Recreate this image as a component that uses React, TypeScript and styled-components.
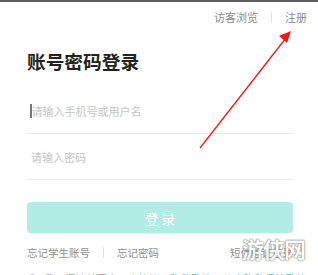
import React from 'react';
import styled, { createGlobalStyle } from 'styled-components';

const GlobalStyle = createGlobalStyle`
  html, body {
    margin: 0;
    padding: 0;
    background: #ffffff;
  }
  body {
    font-family: "Noto Sans CJK SC", "Noto Sans", sans-serif;
  }
`;

const Screen = styled.div`
  position: relative;
  width: 318px;
  height: 275px;
  overflow: hidden;
  background: #fff;
  border-top: 2px solid #5f5f5f;
  box-sizing: border-box;
`;

const TopBar = styled.div`
  display: flex;
  justify-content: flex-end;
  align-items: center;
  height: 30px;
  padding: 0 11px 0 0;
  gap: 13px;
  font-size: 11px;
  color: #8a8a8a;
`;

const Divider = styled.span<{ $h: number }>`
  width: 1px;
  height: ${({ $h }) => $h}px;
  background: #e2e2e2;
`;

const Body = styled.div`
  padding: 0 25px 0 27px;
`;

const Title = styled.h1`
  margin: 16px 0 0;
  font-size: 18.7px;
  line-height: 26px;
  font-weight: 700;
  color: #222;
`;

const Field = styled.div`
  display: flex;
  align-items: center;
  height: 45px;
  border-bottom: 1px solid #ececec;
  font-size: 11px;
  color: #c4c4c4;
`;

const FirstField = styled(Field)`
  margin-top: 14px;
`;

const Caret = styled.span`
  width: 1.5px;
  height: 14px;
  margin-left: 3px;
  background: #777;
`;

const Placeholder = styled.span<{ $pad: number }>`
  padding-left: ${({ $pad }) => $pad}px;
`;

const LoginButton = styled.button`
  display: block;
  width: 100%;
  height: 31px;
  margin-top: 22px;
  border: none;
  border-radius: 4px;
  background: #b2ede5;
  color: #fff;
  font-family: inherit;
  font-size: 13.5px;
  letter-spacing: 3px;
  text-indent: 3px;
  padding: 0;
`;

const LinkRow = styled.div`
  display: flex;
  align-items: center;
  height: 38px;
  font-size: 10.5px;
  color: #8e8e8e;
  gap: 13px;
`;

const Spacer = styled.div`
  flex: 1;
`;

const Agree = styled.div`
  display: flex;
  align-items: center;
  gap: 6px;
  font-size: 10.5px;
  line-height: 16px;
  color: #999;
  white-space: nowrap;
`;

const Radio = styled.span`
  width: 9px;
  height: 9px;
  border: 1px solid #bbb;
  border-radius: 50%;
  flex: none;
`;

const LinkText = styled.span`
  color: #34c3b0;
`;

const Watermark = styled.div`
  position: absolute;
  left: 242px;
  top: 230px;
  font-size: 22px;
  font-weight: 700;
  color: #ffffff;
  letter-spacing: -1px;
  text-shadow: 0 0 1px #555, 0 0 2px #777;
  opacity: 0.9;
  pointer-events: none;
`;

const Arrow = styled.svg`
  position: absolute;
  left: 0;
  top: 0;
  pointer-events: none;
`;

export default function App() {
  return (
    <>
      <GlobalStyle />
      <Screen>
        <TopBar>
          <span>访客浏览</span>
          <Divider $h={11} />
          <span>注册</span>
        </TopBar>
        <Body>
          <Title>账号密码登录</Title>
          <FirstField>
            <Caret />
            <Placeholder $pad={0}>请输入手机号或用户名</Placeholder>
          </FirstField>
          <Field>
            <Placeholder $pad={4}>请输入密码</Placeholder>
          </Field>
          <LoginButton>登录</LoginButton>
          <LinkRow>
            <span>忘记学生账号</span>
            <Divider $h={11} />
            <span>忘记密码</span>
            <Spacer />
            <span>短信验证登录</span>
          </LinkRow>
          <Agree>
            <Radio />
            <span>
              我已阅读并同意<LinkText>用户协议</LinkText>、<LinkText>隐私政策</LinkText>、<LinkText>儿童隐私保护政策</LinkText>
            </span>
          </Agree>
        </Body>
        <Watermark>游侠网</Watermark>
        <Arrow width="318" height="275" viewBox="0 0 318 275">
          <line x1="200" y1="146" x2="286" y2="36" stroke="#f01818" strokeWidth="1.3" />
          <polygon points="291,29 279,34 287,41" fill="#f01818" />
        </Arrow>
      </Screen>
    </>
  );
}
